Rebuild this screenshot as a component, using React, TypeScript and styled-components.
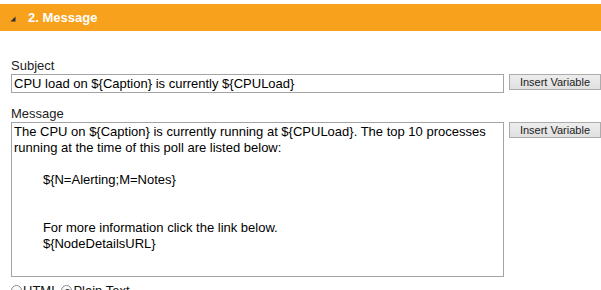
import React from "react";
import styled, { createGlobalStyle } from "styled-components";

const GlobalStyle = createGlobalStyle`
    body {
        margin: 0;
        background: #fff;
        font-family: "Liberation Sans", Arial, Helvetica, sans-serif;
        color: #111;
        overflow: hidden;
    }
`;

const SectionHeader = styled.div`
    margin-top: 4px;
    height: 27px;
    background: #f7a11c;
    display: flex;
    align-items: center;
    gap: 12px;
    padding-left: 10px;

    svg {
        flex: none;
        margin-top: 2px;
    }

    h2 {
        margin: 0;
        font-size: 13px;
        font-weight: bold;
        color: #fff;
    }
`;

const Body = styled.div`
    padding-left: 11px;
`;

const FieldLabel = styled.div<{ $top: number }>`
    margin-top: ${({ $top }) => $top}px;
    font-size: 13px;
    line-height: 15px;
    color: #222;
`;

const FieldRow = styled.div<{ $gap: number }>`
    margin-top: 1px;
    display: flex;
    align-items: flex-start;
    gap: ${({ $gap }) => $gap}px;
`;

const TextInput = styled.input`
    box-sizing: border-box;
    width: 497px;
    height: 19px;
    border: 1px solid #a4a4a4;
    padding: 0 2px;
    margin: 0;
    font-family: inherit;
    font-size: 13px;
    color: #000;
    background: #fff;
    outline: none;
`;

const TextArea = styled.textarea`
    box-sizing: border-box;
    width: 499px;
    height: 155px;
    border: 1px solid #a4a4a4;
    padding: 1px 2px;
    margin: 0;
    font-family: inherit;
    font-size: 13px;
    line-height: 16px;
    color: #000;
    background: #fff;
    resize: none;
    outline: none;
    tab-size: 8;
    overflow: hidden;
`;

const InsertButton = styled.button`
    flex: none;
    height: 16px;
    padding: 0 10px;
    margin: 0;
    border: 1px solid #acacac;
    background: linear-gradient(#ededed, #e0e0e0);
    font-family: inherit;
    font-size: 11px;
    line-height: 14px;
    color: #222;
    white-space: nowrap;
`;

const FormatRow = styled.div`
    margin-top: 6px;
    display: flex;
    align-items: center;
    font-size: 13px;
    line-height: 15px;
`;

const Radio = styled.input.attrs({ type: "radio" })`
    appearance: none;
    width: 11px;
    height: 11px;
    margin: 0 1px 0 0;
    border: 1px solid #8c8c8c;
    border-radius: 50%;
    background: linear-gradient(#fff, #e8e8e8);
    position: relative;

    &:checked::after {
        content: "";
        position: absolute;
        left: 3px;
        top: 3px;
        width: 5px;
        height: 5px;
        border-radius: 50%;
        background: #333;
    }
`;

const RadioLabel = styled.label`
    display: flex;
    align-items: center;
    margin-right: 3px;
`;

const messageText = `The CPU on \${Caption} is currently running at \${CPULoad}. The top 10 processes running at the time of this poll are listed below:

\t\${N=Alerting;M=Notes}


\tFor more information click the link below.
\t\${NodeDetailsURL}`;

export default function App() {
    return (
        <>
            <GlobalStyle />
            <SectionHeader>
                <svg width="6" height="6" viewBox="0 0 6 6">
                    <polygon points="5.5,0.5 5.5,5.5 0.5,5.5" fill="#2b2f38" />
                </svg>
                <h2>2. Message</h2>
            </SectionHeader>
            <Body>
                <FieldLabel $top={27}>Subject</FieldLabel>
                <FieldRow $gap={5}>
                    <TextInput defaultValue="CPU load on ${Caption} is currently ${CPULoad}" />
                    <InsertButton>Insert Variable</InsertButton>
                </FieldRow>
                <FieldLabel $top={13}>Message</FieldLabel>
                <FieldRow $gap={5}>
                    <TextArea defaultValue={messageText} />
                    <InsertButton>Insert Variable</InsertButton>
                </FieldRow>
                <FormatRow>
                    <RadioLabel>
                        <Radio name="format" />
                        HTML
                    </RadioLabel>
                    <RadioLabel>
                        <Radio name="format" defaultChecked />
                        Plain Text
                    </RadioLabel>
                </FormatRow>
            </Body>
        </>
    );
}
